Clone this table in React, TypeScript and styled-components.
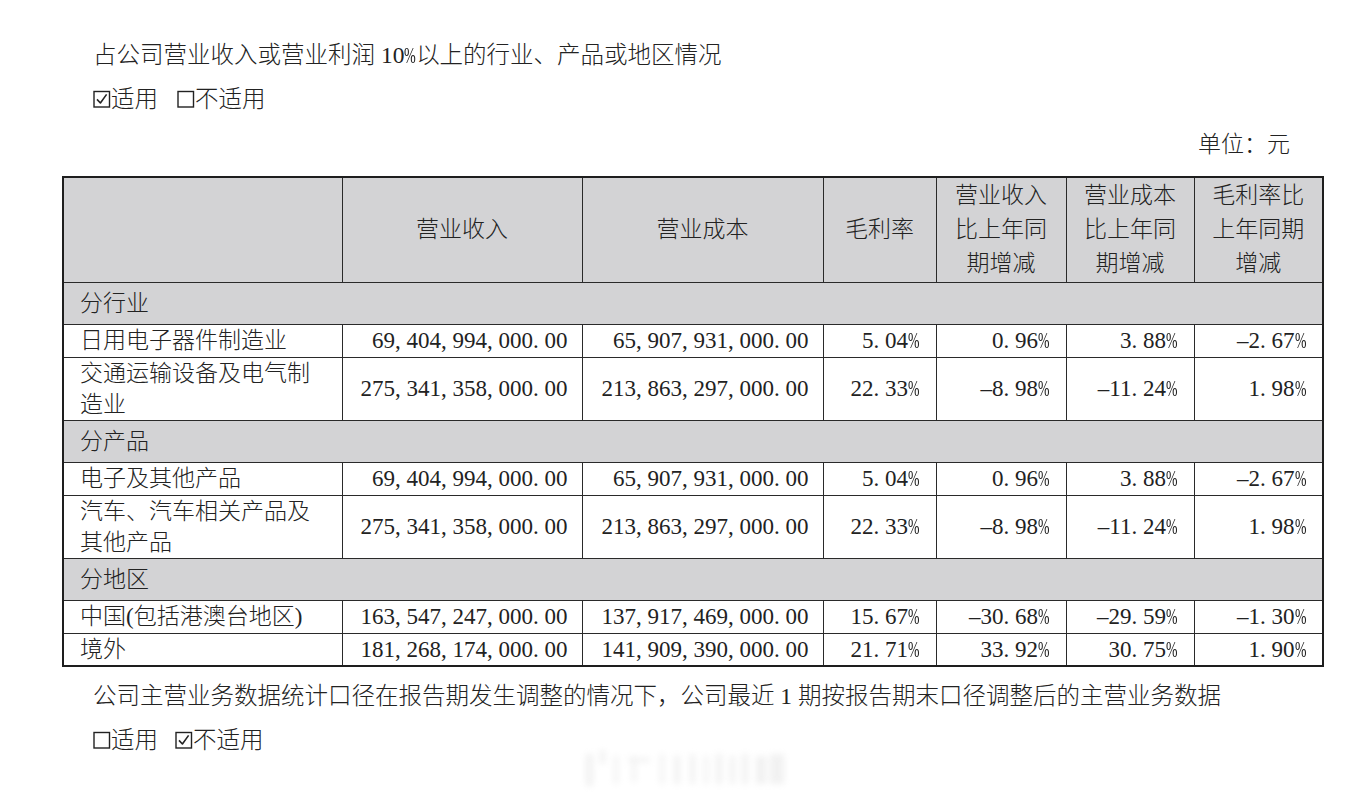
import React from "react";
import styled, { createGlobalStyle } from "styled-components";

const Global = createGlobalStyle`
  html, body { margin: 0; padding: 0; background: #ffffff; }
  body {
    font-family: "Liberation Serif", "Noto Sans CJK SC", serif;
    color: #222222;
  }
`;

const Page = styled.main`
  position: relative;
  width: 1369px;
  height: 798px;
  box-sizing: border-box;
  padding: 40px 47px 0 62px;
  overflow: hidden;
`;

const TextLine = styled.p<{ $mt?: number }>`
  margin: ${(p) => p.$mt ?? 0}px 0 0 31px;
  font-size: 23.5px;
  line-height: 30px;
  font-weight: 300;
  white-space: nowrap;
`;

const ChoiceLine = styled.div<{ $mt?: number }>`
  display: flex;
  align-items: center;
  height: 30px;
  margin: ${(p) => p.$mt ?? 0}px 0 0 31px;
  font-size: 23.5px;
  line-height: 30px;
  font-weight: 300;
  white-space: nowrap;
`;

const Unit = styled.p`
  margin: 16px 32px 0 0;
  text-align: right;
  font-size: 23px;
  line-height: 30px;
  font-weight: 300;
`;

const Choice = styled.span<{ $gap?: number }>`
  display: flex;
  align-items: center;
  margin-left: ${(p) => p.$gap ?? 0}px;
`;

const BoxIcon = styled.svg`
  width: 18px;
  height: 20px;
  flex: none;
`;

const Table = styled.table`
  margin-top: 16px;
  width: 1260px;
  border-collapse: collapse;
  table-layout: fixed;
  font-size: 23px;
  font-weight: 300;
  border: 2px solid #1e1e1e;
`;

const HeadRow = styled.tr`
  height: 105px;
`;

const Row = styled.tr<{ $h: number }>`
  height: ${(p) => p.$h}px;
`;

const Th = styled.th`
  background: #d3d3d5;
  border: 1px solid #2a2a2a;
  font-weight: 300;
  text-align: center;
  vertical-align: middle;
  line-height: 34px;
  padding: 0;
  color: #222;
`;

const SectionCell = styled.td`
  background: #d3d3d5;
  border: 1px solid #2a2a2a;
  padding: 0 0 0 16px;
  text-align: left;
  line-height: 31px;
`;

const LabelCell = styled.td`
  border: 1px solid #2a2a2a;
  padding: 0 6px 0 16px;
  text-align: left;
  vertical-align: middle;
  line-height: 31px;
`;

const NumCell = styled.td<{ $pr: number }>`
  border: 1px solid #2a2a2a;
  padding: 0 ${(p) => p.$pr}px 0 0;
  text-align: right;
  vertical-align: middle;
  line-height: 31px;
  white-space: nowrap;
  font-family: "Liberation Serif", serif;
`;

const Half = styled.span`
  display: inline-block;
  width: 0.5em;
  text-align: left;
`;

const Pct = styled.span`
  display: inline-block;
  width: 0.5em;
  text-align: left;
  white-space: nowrap;
  transform: scaleX(0.6);
  transform-origin: left center;
`;

const Watermark = styled.svg`
  position: absolute;
  left: 570px;
  top: 742px;
  width: 240px;
  height: 56px;
  pointer-events: none;
`;

const Num: React.FC<{ v: string }> = ({ v }) => (
  <>
    {Array.from(v).map((c, i) => {
      if (/[0-9]/.test(c)) return <span key={i}>{c}</span>;
      if (c === "%") return <Pct key={i}>%</Pct>;
      if (c === "-") return <Half key={i}>–</Half>;
      return <Half key={i}>{c}</Half>;
    })}
  </>
);

const CheckBox: React.FC<{ checked?: boolean }> = ({ checked }) => (
  <BoxIcon viewBox="0 0 18 20">
    <rect x="1" y="2.5" width="15.5" height="15.5" fill="none" stroke="#222" strokeWidth="1.4" />
    {checked && (
      <path d="M4 10.4 L7.4 14 L13.6 5.4" fill="none" stroke="#222" strokeWidth="1.6" strokeLinejoin="round" />
    )}
  </BoxIcon>
);

type DataRow = {
  label: React.ReactNode;
  h: number;
  vals: string[];
};

type Section = { title: string; rows: DataRow[] };

const sections: Section[] = [
  {
    title: "分行业",
    rows: [
      {
        label: "日用电子器件制造业",
        h: 33,
        vals: ["69,404,994,000.00", "65,907,931,000.00", "5.04%", "0.96%", "3.88%", "-2.67%"],
      },
      {
        label: (
          <>
            交通运输设备及电气制
            <br />
            造业
          </>
        ),
        h: 63,
        vals: ["275,341,358,000.00", "213,863,297,000.00", "22.33%", "-8.98%", "-11.24%", "1.98%"],
      },
    ],
  },
  {
    title: "分产品",
    rows: [
      {
        label: "电子及其他产品",
        h: 33,
        vals: ["69,404,994,000.00", "65,907,931,000.00", "5.04%", "0.96%", "3.88%", "-2.67%"],
      },
      {
        label: (
          <>
            汽车、汽车相关产品及
            <br />
            其他产品
          </>
        ),
        h: 63,
        vals: ["275,341,358,000.00", "213,863,297,000.00", "22.33%", "-8.98%", "-11.24%", "1.98%"],
      },
    ],
  },
  {
    title: "分地区",
    rows: [
      {
        label: "中国(包括港澳台地区)",
        h: 33,
        vals: ["163,547,247,000.00", "137,917,469,000.00", "15.67%", "-30.68%", "-29.59%", "-1.30%"],
      },
      {
        label: "境外",
        h: 33,
        vals: ["181,268,174,000.00", "141,909,390,000.00", "21.71%", "33.92%", "30.75%", "1.90%"],
      },
    ],
  },
];

const colWidths = [279, 240, 241, 113, 130, 128, 129];
const padRight = [14, 14, 16, 16, 16, 16];

export default function App() {
  return (
    <Page>
      <Global />
      <TextLine>
        占公司营业收入或营业利润 <Num v="10%" />以上的行业、产品或地区情况
      </TextLine>
      <ChoiceLine $mt={14}>
        <Choice>
          <CheckBox checked />
          适用
        </Choice>
        <Choice $gap={19}>
          <CheckBox />
          不适用
        </Choice>
      </ChoiceLine>
      <Unit>单位：元</Unit>
      <Table>
        <colgroup>
          {colWidths.map((w, i) => (
            <col key={i} style={{ width: w }} />
          ))}
        </colgroup>
        <thead>
          <HeadRow>
            <Th />
            <Th>营业收入</Th>
            <Th>营业成本</Th>
            <Th>毛利率</Th>
            <Th>
              营业收入
              <br />
              比上年同
              <br />
              期增减
            </Th>
            <Th>
              营业成本
              <br />
              比上年同
              <br />
              期增减
            </Th>
            <Th>
              毛利率比
              <br />
              上年同期
              <br />
              增减
            </Th>
          </HeadRow>
        </thead>
        <tbody>
          {sections.map((s) => (
            <React.Fragment key={s.title}>
              <Row $h={42}>
                <SectionCell colSpan={7}>{s.title}</SectionCell>
              </Row>
              {s.rows.map((r, ri) => (
                <Row $h={r.h} key={ri}>
                  <LabelCell>{r.label}</LabelCell>
                  {r.vals.map((v, vi) => (
                    <NumCell $pr={padRight[vi]} key={vi}>
                      <Num v={v} />
                    </NumCell>
                  ))}
                </Row>
              ))}
            </React.Fragment>
          ))}
        </tbody>
      </Table>
      <TextLine $mt={14}>
        公司主营业务数据统计口径在报告期发生调整的情况下，公司最近 1 期按报告期末口径调整后的主营业务数据
      </TextLine>
      <ChoiceLine $mt={14}>
        <Choice>
          <CheckBox />
          适用
        </Choice>
        <Choice $gap={17}>
          <CheckBox checked />
          不适用
        </Choice>
      </ChoiceLine>
      <Watermark viewBox="0 0 240 56">
        <defs>
          <filter id="wmblur" x="-20%" y="-20%" width="140%" height="140%">
            <feGaussianBlur stdDeviation="3" />
          </filter>
        </defs>
        <g filter="url(#wmblur)" fill="#d8d8d8" opacity="0.35">
          <rect x="16" y="12" width="7" height="32" />
          <rect x="30" y="8" width="5" height="14" />
          <rect x="44" y="14" width="4" height="28" />
          <rect x="58" y="16" width="22" height="4" />
          <rect x="62" y="14" width="4" height="26" />
          <rect x="90" y="12" width="4" height="30" />
          <rect x="104" y="14" width="6" height="28" />
          <rect x="120" y="12" width="5" height="30" />
          <rect x="134" y="14" width="4" height="28" />
          <rect x="146" y="12" width="6" height="30" />
          <rect x="160" y="14" width="5" height="28" />
          <rect x="172" y="12" width="6" height="30" />
          <rect x="186" y="14" width="10" height="28" />
          <rect x="200" y="12" width="14" height="30" />
        </g>
      </Watermark>
    </Page>
  );
}
